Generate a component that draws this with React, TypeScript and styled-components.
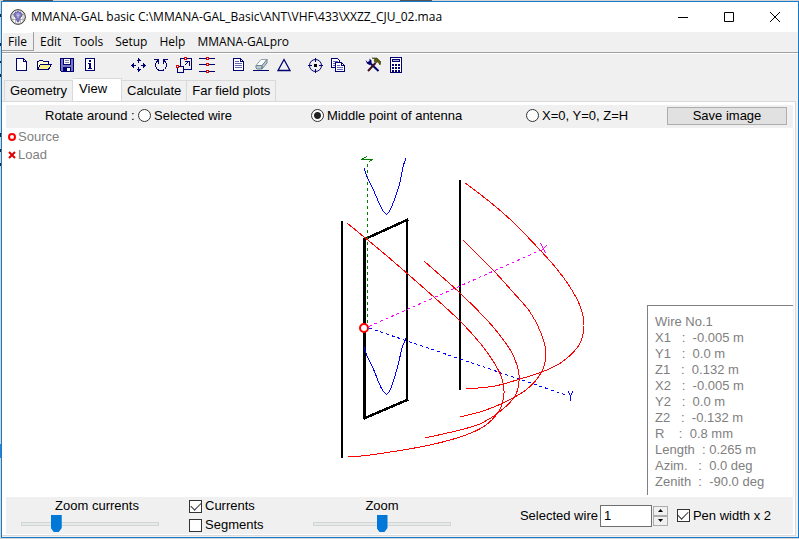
import React, { useState } from "react";
import styled, { createGlobalStyle, css } from "styled-components";

const NAVY = "#000070";
const FACE = "#f0f0f0";
const EDGE = "#d9d9d9";

const GlobalStyle = createGlobalStyle`
  * { box-sizing: border-box; }
  body {
    margin: 0;
    background: #d4d4d4;
    color: #000;
    font: 13px/16px "Liberation Sans", Arial, sans-serif;
  }
  button, input { font: inherit; color: inherit; margin: 0; }
`;

const Desktop = styled.div`
  min-height: 100vh;
  display: flex;
  padding: 1px 0 1px 1px;
  background:
    linear-gradient(#222, #222) 0 14px / 1px 3px no-repeat,
    linear-gradient(#222, #222) 0 43px / 1px 3px no-repeat,
    linear-gradient(#222, #222) 0 61px / 1px 2px no-repeat,
    linear-gradient(#222, #222) 0 74px / 1px 3px no-repeat,
    linear-gradient(#222, #222) 0 133px / 1px 4px no-repeat,
    linear-gradient(#222, #222) 0 149px / 1px 3px no-repeat,
    linear-gradient(#222, #222) 0 163px / 1px 3px no-repeat,
    linear-gradient(#2a7fd0, #2a7fd0) 0 444px / 1px 14px no-repeat,
    linear-gradient(#555, #555) 400px 0 / 32px 1px no-repeat,
    linear-gradient(#555, #555) 3px 0 / 50px 1px no-repeat,
    #d4d4d4;
`;

const Window = styled.main`
  flex: 1;
  min-width: 0;
  display: flex;
  flex-direction: column;
  border: 1px solid #1979ca;
  background: ${FACE};
`;

const TitleBar = styled.header`
  height: 30px;
  display: flex;
  align-items: center;
  padding-left: 8px;
  background: #fff;
`;

const Title = styled.h1`
  flex: 1;
  margin: 0 0 0 5px;
  font: 400 12px/18px "Open Sans", "Noto Sans", sans-serif;
  white-space: nowrap;
`;

const CaptionButton = styled.button`
  width: 46px;
  height: 30px;
  padding: 0;
  border: 0;
  background: transparent;
  display: grid;
  place-items: center;
`;

const MenuBar = styled.nav`
  height: 22px;
  display: flex;
  border-bottom: 1px solid #fff;
  box-shadow: inset 0 -1px #a0a0a0;
`;

const MenuItem = styled.button<{ $raised?: boolean }>`
  height: 19px;
  padding: 0 6px;
  border: 0;
  background: transparent;
  font: 12px/18px "Open Sans", "Noto Sans", sans-serif;
  white-space: nowrap;
  ${(p) =>
    p.$raised &&
    css`
      padding: 0 7px 0 6px;
      box-shadow: inset -1px -1px #a0a0a0, inset 1px 1px #fff;
    `}
`;

const Toolbar = styled.div`
  height: 24px;
  display: flex;
  align-items: center;
  padding: 0 0 2px 7px;
`;

const ToolGroup = styled.div<{ $gap: number }>`
  display: flex;
  margin-right: ${(p) => p.$gap}px;
`;

const ToolButton = styled.button`
  width: 23px;
  height: 22px;
  padding: 0;
  border: 0;
  background: transparent;
  display: grid;
  place-items: center;
`;

const Tabs = styled.div`
  height: 23px;
  display: flex;
  align-items: flex-end;
  padding-left: 2px;
`;

const Tab = styled.button<{ $active?: boolean }>`
  height: 21px;
  padding: 0 5px;
  border: 1px solid ${EDGE};
  border-width: 1px 1px 0 0;
  background: ${FACE};
  white-space: nowrap;
  &:first-child {
    border-left-width: 1px;
  }
  ${(p) =>
    p.$active &&
    css`
      height: 24px;
      margin-bottom: -1px;
      padding: 0 14px 3px 6px;
      background: #fff;
    `}
`;

const Page = styled.section`
  flex: 1;
  display: flex;
  flex-direction: column;
  margin: 0 2px 1px 0;
  padding: 3px 2px 1px 4px;
  border: 1px solid ${EDGE};
  border-left: 0;
  background: #fff;
`;

const RotateBar = styled.div`
  height: 23px;
  display: grid;
  grid-template-columns: 93px 173fr 215fr 141fr 120px;
  align-items: center;
  padding: 0 6px 2px 39px;
  background: ${FACE};
  white-space: nowrap;
`;

const Choice = styled.label`
  display: flex;
  align-items: center;
  gap: 3px;
  white-space: nowrap;
`;

const Radio = styled.input.attrs({ type: "radio" })`
  appearance: none;
  width: 13px;
  height: 13px;
  border: 1px solid #333;
  border-radius: 50%;
  background: #fff;
  &:checked {
    background: radial-gradient(circle, #222 3px, #fff 4px);
  }
`;

const Check = styled.input.attrs({ type: "checkbox" })`
  appearance: none;
  width: 13px;
  height: 13px;
  border: 1px solid #333;
  background: #fff;
  display: grid;
  place-items: center;
  &:checked::before {
    content: "";
    width: 9px;
    height: 5px;
    margin-top: -3px;
    border: solid #333;
    border-width: 0 0 1px 1px;
    transform: rotate(-45deg);
  }
`;

const SaveButton = styled.button`
  height: 18px;
  padding: 0;
  border: 1px solid #adadad;
  background: #e1e1e1;
  line-height: 16px;
`;

const View = styled.div`
  flex: 1;
  display: grid;
  grid-template: 1fr / 1fr;
  border-right: 1px solid ${FACE};
  margin-right: -1px;
  color: #808080;
  > * {
    grid-area: 1 / 1;
  }
`;

const Scene = styled.svg`
  display: block;
  width: 100%;
  height: 100%;
  min-height: 369px;
  shape-rendering: crispEdges;
`;

const Legend = styled.ul`
  place-self: start;
  margin: 0;
  padding: 0 0 0 2px;
  list-style: none;
  li {
    height: 18px;
    display: flex;
    align-items: center;
    gap: 2px;
  }
`;

const WireInfo = styled.div`
  place-self: end;
  width: 146px;
  margin-bottom: 2px;
  padding: 8px 0 5px 7px;
  border: solid #808080;
  border-width: 1px 0 0 1px;
  white-space: pre;
`;

const BottomBar = styled.div`
  height: 37px;
  display: flex;
  align-items: center;
  justify-content: space-between;
  padding: 0 22px 0 15px;
  background: ${FACE};
  white-space: nowrap;
`;

const Cluster = styled.div<{ $gap: number }>`
  display: flex;
  align-items: center;
  gap: ${(p) => p.$gap}px;
`;

const SliderField = styled.label<{ $indent?: number }>`
  width: 138px;
  display: flex;
  flex-direction: column;
  gap: 1px;
  text-align: center;
  > span {
    padding-left: ${(p) => p.$indent ?? 0}px;
  }
`;

const Slider = styled.input.attrs({ type: "range" })`
  appearance: none;
  width: 100%;
  height: 18px;
  background: transparent;
  &::-webkit-slider-runnable-track {
    height: 4px;
    border: 1px solid #d1d6d3;
    background: #e7eaea;
  }
  &::-webkit-slider-thumb {
    appearance: none;
    width: 11px;
    height: 17px;
    margin-top: -8px;
    background: #0078d7;
    clip-path: polygon(0 0, 100% 0, 100% 76%, 73% 100%, 27% 100%, 0 76%);
  }
`;

const CheckStack = styled.div`
  width: 94px;
  display: flex;
  flex-direction: column;
  gap: 3px;
`;

const WireField = styled.label`
  display: flex;
  align-items: center;
  gap: 2px;
`;

const WireInput = styled.input`
  width: 52px;
  height: 22px;
  padding: 0 3px;
  border: 1px solid #6f6f6f;
  background: #fff;
`;

const Spinner = styled.div`
  display: grid;
  margin-left: 1px;
`;

const SpinButton = styled.button`
  width: 15px;
  height: 10px;
  padding: 0;
  border: 1px solid #adadad;
  background: ${FACE};
  display: grid;
  place-items: center;
`;

/* ---------- icons ---------- */

const IconSvg = styled.svg.attrs({ width: 16, height: 16, viewBox: "0 0 16 16", fill: "none", stroke: NAVY })`
  display: block;
  shape-rendering: crispEdges;
`;

const node = (x: number, y: number) => (
  <rect x={x + 0.5} y={y + 0.5} width="2" height="2" fill="#fff" stroke="#e00000" />
);

const icons: Record<string, React.ReactNode> = {
  New: (
    <>
      <path d="M3.5 1.5h7l3 3v9h-10z" fill="#fff" />
      <path d="M10.5 1.5v3h3" />
    </>
  ),
  Open: (
    <>
      <path d="M1.5 12.5v-8h1l1-1h3l1 1h5v3" fill="#ffffd0" />
      <path d="M1.5 12.5l3-5h11l-3 5z" fill="#f5f08c" />
    </>
  ),
  Save: (
    <>
      <path d="M1.5 1.5h13v13h-12l-1-1z" fill="#7878c0" />
      <path d="M4.5 1.5h7v6h-7z" fill="#fff" />
      <path d="M6 3.5h4M6 5.5h4" stroke="#8080c0" />
      <path d="M4.5 10.5h7v4h-7z" fill={NAVY} />
      <path d="M8 11h3v3h-3z" fill="#fff" stroke="none" />
    </>
  ),
  Info: (
    <>
      <rect x="3.5" y="1.5" width="9" height="12" rx="1" fill="#fff" />
      <path d="M7 3h2v2h-2zM6 6h3v5h1v1h-4v-1h1v-4h-1z" fill={NAVY} stroke="none" />
    </>
  ),
  Move: (
    <>
      <path d="M8.5 1v5M8.5 10v5M1 8.5h5M11 8.5h5" />
      <path d="M6.5 3.5h4M7.5 2.5h2M6.5 12.5h4M7.5 13.5h2M3.5 6v5M2.5 7v3M13.5 6v5M14.5 7v3" />
    </>
  ),
  Rotate: (
    <>
      <path d="M4.5 3.5l-2 3v3l2 3 2 1h3l2-1 2-3v-3l-2-3" />
      <path d="M1 2h5v5h-1v-2h-1v-2h-3zM15 2h-5v5h1v-2h1v-2h3z" fill={NAVY} stroke="none" />
    </>
  ),
  Scale: (
    <>
      <path d="M4.5 1.5h11v11h-11z" />
      <path d="M1.5 9.5h6v6h-6z" fill={FACE} />
      <path d="M8.5 8.5l4-4M9 4.5h4v4" />
      {node(8, 0)}
      {node(0, 8)}
    </>
  ),
  Segmentation: (
    <>
      <path d="M0 1.5h16M0 7.5h16M0 14.5h16" />
      {node(7, 0)}
      {node(7, 6)}
      {node(7, 13)}
    </>
  ),
  Comment: (
    <>
      <path d="M3.5 1.5h7l3 3v9h-10z" fill="#fff" />
      <path d="M10.5 1.5v3h3" />
      <path d="M5 4.5h4M5 6.5h7M5 8.5h7M5 10.5h7" stroke="#6666b4" />
    </>
  ),
  Erase: (
    <g shapeRendering="auto">
      <path d="M0 13.5h16" />
      <path d="M3 8.5l5-6h6l-5 6z" fill="#fff" stroke="#90a4ac" />
      <path d="M3 8.5h6v3.5h-5l-1-1zM9 8.5l5-6v3.500l-5 6z" fill="#b8ccd8" stroke="#70848c" />
    </g>
  ),
  Triangle: <path d="M8 2.500l6 11h-12z" shapeRendering="auto" strokeWidth="1.300" />,
  Center: (
    <>
      <circle cx="8.500" cy="8.500" r="6" shapeRendering="auto" />
      <path d="M8.500 1v4M8.500 12v4M1 8.500h4M12 8.500h4" />
      <rect x="7" y="7" width="3" height="3" fill="#000" stroke="none" />
    </>
  ),
  Copy: (
    <>
      <path d="M1.500 1.500h6l2 2v7h-8z" fill="#fff" />
      <path d="M3 4.500h5M3 6.500h5M3 8.500h5" stroke="#6666b4" />
      <path d="M5.500 5.500h6l3 3v6h-9z" fill="#fff" />
      <path d="M11.500 5.500v3h3" />
      <path d="M7 8.500h3M7 10.500h6M7 12.500h6" stroke="#6666b4" />
    </>
  ),
  Options: (
    <g shapeRendering="auto">
      <path d="M5 6l8.500 8" strokeWidth="2" />
      <path d="M0.500 3l2 2 2-1V1.500l2 2v3L4.500 8 2 6.500z" fill={NAVY} stroke="none" />
      <path d="M10.500 6L3 14" stroke="#401020" strokeWidth="2" />
      <path d="M7 1h5l4 4-1 3-2-3h-1l-1 1-2-2 1-2z" fill="#5c5c10" stroke="#222200" strokeWidth=".5" />
    </g>
  ),
  Calculator: (
    <>
      <rect x="2.500" y="0.500" width="11" height="15" rx="1" fill="#fff" />
      <path d="M4.500 2.500h7v2h-7z" fill="#b8b8e0" />
      <path d="M4 8h8M4 11h8M4 14h8" strokeWidth="2" strokeDasharray="2 1" />
    </>
  ),
};

const toolGroups: { gap: number; names: string[] }[] = [
  { gap: 25, names: ["New", "Open", "Save", "Info"] },
  { gap: 8, names: ["Move", "Rotate", "Scale", "Segmentation"] },
  { gap: 8, names: ["Comment", "Erase", "Triangle"] },
  { gap: 12, names: ["Center", "Copy"] },
  { gap: 0, names: ["Options", "Calculator"] },
];

const AppLogo = () => (
  <svg width="16" height="16" viewBox="0 0 16 16" fill="none" aria-hidden="true">
    <circle cx="8" cy="8" r="7.300" fill="#fff" stroke="#222" />
    <path d="M3 2.500v11M5.500 1v14M10.500 1v14M13 2.500v11M1 5.500h14M1 10.500h14M8 1v14" stroke="#888" strokeWidth=".6" />
    <path d="M8 2.500L11.500 4 12 7 9.500 9.500 9 12.500H7L6.500 9.500 4 7l.5-3z" fill="#8078c0" stroke="#50489a" strokeWidth=".7" />
    <path d="M8 4v5M6 5.500l2 1.500 2-1.500" stroke="#d8d4f4" strokeWidth=".8" />
  </svg>
);

/* ---------- antenna scene ---------- */

type Point = [number, number];

/** Smooth path through the points (Catmull-Rom converted to cubic segments). */
function smooth(points: Point[]): string {
  let d = `M${points[0][0]} ${points[0][1]}`;
  for (let i = 0; i < points.length - 1; i++) {
    const a = points[Math.max(i - 1, 0)];
    const b = points[i];
    const c = points[i + 1];
    const e = points[Math.min(i + 2, points.length - 1)];
    d += `C${b[0] + (c[0] - a[0]) / 6} ${b[1] + (c[1] - a[1]) / 6} ${c[0] - (e[0] - b[0]) / 6} ${
      c[1] - (e[1] - b[1]) / 6
    } ${c[0]} ${c[1]}`;
  }
  return d;
}

const elementCurrents: Point[][] = [
  [[347, 223], [387, 256], [435, 298], [460, 321], [480, 343], [493, 361], [501, 376], [504, 393], [499, 411], [483, 427], [457, 438], [420, 447], [370, 455], [348, 457]],
  [[424, 261], [460, 293], [487, 320], [502, 338], [513, 355], [519, 375], [516, 394], [503, 409], [482, 423], [460, 430], [425, 438]],
  [[463, 240], [478, 255], [494, 271], [512, 291], [530, 312], [541, 333], [546, 354], [541, 373], [526, 390], [503, 403], [483, 411], [460, 417]],
  [[465, 183], [490, 202], [514, 223], [540, 250], [556, 268], [570, 287], [580, 306], [584, 326], [579, 345], [562, 362], [542, 372], [520, 379], [495, 386], [466, 389]],
];

const loopCurrents: Point[][] = [
  [[364, 168], [367, 177], [373, 189], [379, 203], [383, 211], [387, 214], [391, 208], [395, 198], [400, 182], [403, 167], [406, 158]],
  [[364, 347], [367, 356], [373, 368], [379, 383], [383, 391], [387, 394], [391, 388], [395, 376], [399, 361], [402, 348], [406, 338]],
];

const AntennaScene = ({ currents, pen }: { currents: boolean; pen: number }) => (
  <Scene viewBox="6 128 787 369" preserveAspectRatio="xMidYMid meet" fill="none" role="img" aria-label="Antenna view">
    <g stroke="#000" strokeWidth={pen}>
      <path d="M342 221V458M460 180V390M407 220V400" />
      <path d="M365 239L407 220M365 418L407 400" strokeWidth={pen + 0.5} strokeLinecap="square" />
      <path d="M364.500 238V419" strokeWidth={pen + 1} />
    </g>
    <path d="M367.500 164V326" stroke="#008000" strokeDasharray="3 3" />
    <path d="M367 156.500L361 159.500H373L369 161.500" stroke="#008000" />
    <path d="M369 326.500L541 250" stroke="#ff00ff" strokeDasharray="3 3" />
    <path d="M540.500 243L545.500 253M547 245L541 251" stroke="#ff00ff" />
    <path d="M369 328L566 395" stroke="#0000ff" strokeDasharray="3 3" />
    <path d="M568 391L570.500 396L573 391M571 395L570 401" stroke="#0000ff" />
    {currents && (
      <>
        <g stroke="#ff0000">
          {elementCurrents.map((points, i) => (
            <path key={i} d={smooth(points)} />
          ))}
        </g>
        <g stroke="#0000ff">
          {loopCurrents.map((points, i) => (
            <path key={i} d={smooth(points)} />
          ))}
        </g>
      </>
    )}
    <circle cx="364" cy="328" r="4" fill="#fff" stroke="#ff0000" strokeWidth="2" shapeRendering="auto" />
  </Scene>
);

const wireInfo = [
  "Wire No.1",
  "X1   :  -0.005 m",
  "Y1   :  0.0 m",
  "Z1   :  0.132 m",
  "X2   :  -0.005 m",
  "Y2   :  0.0 m",
  "Z2   :  -0.132 m",
  "R    :  0.8 mm",
  "Length  : 0.265 m",
  "Azim.   :  0.0 deg",
  "Zenith  :  -90.0 deg",
];

const menus = ["File", "Edit", "Tools", "Setup", "Help", "MMANA-GALpro"];
const tabs = ["Geometry", "View", "Calculate", "Far field plots"];
const pivots = ["Selected wire", "Middle point of antenna", "X=0, Y=0, Z=H"];

export default function App() {
  const [pivot, setPivot] = useState(1);
  const [currents, setCurrents] = useState(true);
  const [wide, setWide] = useState(true);
  const [wire, setWire] = useState(1);

  return (
    <>
      <GlobalStyle />
      <Desktop>
        <Window>
          <TitleBar>
            <AppLogo />
            <Title>MMANA-GAL basic C:\MMANA-GAL_Basic\ANT\VHF\433\XXZZ_CJU_02.maa</Title>
            <CaptionButton aria-label="Minimize">
              <svg width="10" height="10" stroke="#000"><path d="M0 5.500h10" /></svg>
            </CaptionButton>
            <CaptionButton aria-label="Maximize">
              <svg width="10" height="10" stroke="#000" fill="none"><path d="M.5 .5h9v9h-9z" /></svg>
            </CaptionButton>
            <CaptionButton aria-label="Close">
              <svg width="10" height="10" stroke="#000"><path d="M0 0l10 10M10 0L0 10" /></svg>
            </CaptionButton>
          </TitleBar>

          <MenuBar>
            {menus.map((m, i) => (
              <MenuItem key={m} $raised={i === 0}>{m}</MenuItem>
            ))}
          </MenuBar>

          <Toolbar>
            {toolGroups.map((g) => (
              <ToolGroup key={g.names[0]} $gap={g.gap}>
                {g.names.map((n) => (
                  <ToolButton key={n} aria-label={n}>
                    <IconSvg>{icons[n]}</IconSvg>
                  </ToolButton>
                ))}
              </ToolGroup>
            ))}
          </Toolbar>

          <Tabs role="tablist">
            {tabs.map((t) => (
              <Tab key={t} role="tab" aria-selected={t === "View"} $active={t === "View"}>{t}</Tab>
            ))}
          </Tabs>

          <Page>
            <RotateBar role="radiogroup" aria-label="Rotate around">
              <span>Rotate around :</span>
              {pivots.map((p, i) => (
                <Choice key={p}>
                  <Radio name="pivot" checked={pivot === i} onChange={() => setPivot(i)} />
                  {p}
                </Choice>
              ))}
              <SaveButton>Save image</SaveButton>
            </RotateBar>

            <View>
              <AntennaScene currents={currents} pen={wide ? 2 : 1} />
              <Legend>
                <li>
                  <svg width="8" height="8" fill="none" stroke="#f00" strokeWidth="2"><circle cx="4" cy="4" r="3" /></svg>
                  Source
                </li>
                <li>
                  <svg width="8" height="8" stroke="#e00000" strokeWidth="2"><path d="M1 1l6 6M7 1L1 7" /></svg>
                  Load
                </li>
              </Legend>
              <WireInfo>
                {wireInfo.map((line) => (
                  <div key={line}>{line}</div>
                ))}
              </WireInfo>
            </View>

            <BottomBar>
              <Cluster $gap={30}>
                <SliderField $indent={14}>
                  <span>Zoom currents</span>
                  <Slider min={0} max={100} defaultValue={23} />
                </SliderField>
                <CheckStack>
                  <Choice>
                    <Check checked={currents} onChange={() => setCurrents(!currents)} />
                    Currents
                  </Choice>
                  <Choice>
                    <Check />
                    Segments
                  </Choice>
                </CheckStack>
                <SliderField>
                  <span>Zoom</span>
                  <Slider min={0} max={100} defaultValue={50} />
                </SliderField>
              </Cluster>
              <Cluster $gap={9}>
                <Cluster $gap={0}>
                  <WireField>
                    Selected wire
                    <WireInput value={wire} onChange={(e) => setWire(Number(e.target.value) || 1)} />
                  </WireField>
                  <Spinner>
                    <SpinButton aria-label="Next wire" onClick={() => setWire(wire + 1)}>
                      <svg width="5" height="3"><path d="M0 3h5L2.500 0z" /></svg>
                    </SpinButton>
                    <SpinButton aria-label="Previous wire" onClick={() => setWire(Math.max(1, wire - 1))}>
                      <svg width="5" height="3"><path d="M0 0h5L2.500 3z" /></svg>
                    </SpinButton>
                  </Spinner>
                </Cluster>
                <Choice>
                  <Check checked={wide} onChange={() => setWide(!wide)} />
                  Pen width x 2
                </Choice>
              </Cluster>
            </BottomBar>
          </Page>
        </Window>
      </Desktop>
    </>
  );
}
